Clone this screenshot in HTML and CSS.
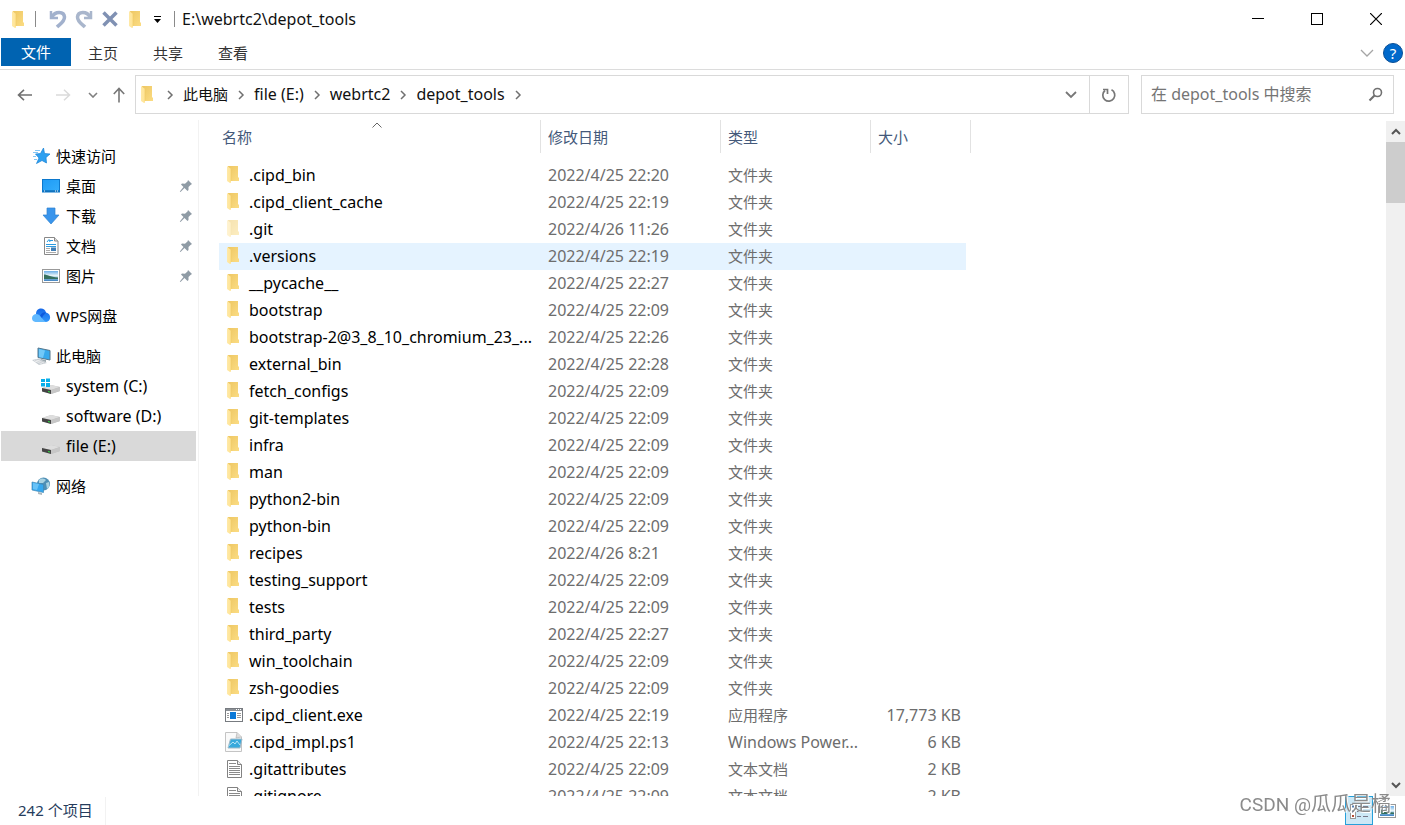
FILE: index.html
```html
<!DOCTYPE html>
<html lang="zh-CN">
<head>
<meta charset="utf-8">
<title>E:\webrtc2\depot_tools</title>
<link rel="stylesheet" href="styles.css">
</head>
<body>
<svg class="sprite" aria-hidden="true">
  <defs>
    <linearGradient id="g-front" x1="0" y1="0" x2="1" y2="0"><stop offset="0" stop-color="#ffe9a8"/><stop offset="1" stop-color="#ffe391"/></linearGradient>
    <linearGradient id="g-back" x1="0" y1="0" x2="1" y2="1"><stop offset="0" stop-color="#eec763"/><stop offset="1" stop-color="#fbdc83"/></linearGradient>
    <linearGradient id="g-blue" x1="0" y1="0" x2="1" y2="1"><stop offset="0" stop-color="#1e9bf5"/><stop offset="1" stop-color="#35aefc"/></linearGradient>
    <linearGradient id="g-cloud" x1="0" y1="0" x2="0" y2="1"><stop offset="0" stop-color="#1568e8"/><stop offset="1" stop-color="#2f96fb"/></linearGradient>
    <linearGradient id="g-sky" x1="0" y1="0" x2="0" y2="1"><stop offset="0" stop-color="#6aaee8"/><stop offset=".45" stop-color="#e6f3f8"/><stop offset=".7" stop-color="#8fc0dd"/><stop offset="1" stop-color="#3d80c2"/></linearGradient>
  </defs>
  <symbol id="folder" viewBox="0 0 12 17"><path d="M1 0H11V11L12 12V15H3Z" fill="url(#g-back)"/><path d="M0 0L4 3V16.500L3 17L0 15Z" fill="url(#g-front)"/><path d="M4 3V15" stroke="#efc964" stroke-width=".6"/></symbol>
  <symbol id="drive" viewBox="0 0 20 20"><path d="M1 12L10 9L19 11V15L10 18L1 15Z" fill="#bdbdbd"/><path d="M1 12L10 9L19 11L10 14Z" fill="#dedede"/><path d="M1 12L10 14V18L1 15.500Z" fill="#454545"/><path d="M10 14L19 11V15L10 18Z" fill="#c6c6c6"/><path d="M7 15L9 15.500V16.500L7 16Z" fill="#31e043"/></symbol>
  <symbol id="pin" viewBox="0 0 14 14"><path d="M9 1L13 5L11.500 6L9.500 8L9.500 11L8.500 12L5.500 9L1.500 13L.8 12.500L4.500 8L2 5.500L3 4.500L6 4.800L8.500 2.500Z" fill="#8f9ba5"/></symbol>
  <symbol id="photo" viewBox="0 0 20 20"><rect x="1.500" y="3.500" width="17" height="13" fill="#fff" stroke="#999"/><rect x="3" y="5" width="14" height="10" fill="url(#g-sky)"/><path d="M3 8.500C6 8.500 9 11 17 11.500V13H3Z" fill="#356f5e"/></symbol>
  <symbol id="text" viewBox="0 0 18 20"><path d="M2.500 1.500H12.500L16.500 5.500V18.500H2.500Z" fill="#fff" stroke="#828282"/><path d="M12.500 1.500V5.500H16.500" fill="#eee" stroke="#828282"/><path d="M4 4.500H11M4 7.500H15M4 9.500H15M4 11.500H15M4 13.500H15M4 15.500H15" stroke="#8a8a8a"/></symbol>
  <symbol id="crumb" viewBox="0 0 8 10"><path d="M2 1L6 5L2 9" fill="none" stroke="#707070" stroke-width="1.500"/></symbol>
</svg>

<header class="titlebar">
  <svg class="folder"><use href="#folder"/></svg>
  <i class="sep sep-app"></i>
  <button class="tool" aria-label="撤消"><svg width="18" height="20" viewBox="0 0 18 20"><path d="M2 2V9H9" fill="none" stroke="#a2b1cd" stroke-width="2.500"/><path d="M3 8C6 2 15 2 15.500 8C15.500 13 11 15 8 18" fill="none" stroke="#a2b1cd" stroke-width="3.500"/></svg></button>
  <button class="tool" aria-label="恢复"><svg width="18" height="20" viewBox="0 0 18 20"><path d="M16 2V9H9" fill="none" stroke="#a9b6cc" stroke-width="2.500"/><path d="M15 8C12 2 3 2 2.500 8C2.500 13 7 15 10 18" fill="none" stroke="#a9b6cc" stroke-width="3.500"/></svg></button>
  <button class="tool" aria-label="删除"><svg width="18" height="20" viewBox="0 0 18 20"><path d="M2.500 3.500L15.500 16.500M15.500 3.500L2.500 16.500" stroke="#8091b3" stroke-width="3.500"/></svg></button>
  <button class="tool tool-folder" aria-label="新建文件夹"><svg class="folder"><use href="#folder"/></svg></button>
  <button class="tool tool-more" aria-label="自定义"><svg width="9" height="10" viewBox="0 0 9 10"><path d="M1 2.500H8" stroke="#000"/><path d="M1 5H8L4.500 9Z"/></svg></button>
  <i class="sep"></i>
  <h1 class="title">E:\webrtc2\depot_tools</h1>
  <div class="winbuttons">
    <button aria-label="最小化"><svg width="12" height="12"><path d="M0 5.500H12" stroke="#000"/></svg></button>
    <button aria-label="最大化"><svg width="12" height="12"><rect x=".5" y=".5" width="11" height="11" fill="none" stroke="#000"/></svg></button>
    <button aria-label="关闭"><svg width="12" height="12"><path d="M0 0L12 12M12 0L0 12" stroke="#000" stroke-width="1.200"/></svg></button>
  </div>
</header>

<nav class="ribbon">
  <button class="tab file">文件</button>
  <button class="tab">主页</button>
  <button class="tab">共享</button>
  <button class="tab">查看</button>
  <div class="ribbon-end">
    <button aria-label="展开功能区"><svg width="14" height="8"><path d="M1 1L7 7L13 1" fill="none" stroke="#a5a5a5" stroke-width="1.300"/></svg></button>
    <button class="help" aria-label="帮助">?</button>
  </div>
</nav>

<div class="navrow">
  <div class="arrows">
    <button aria-label="后退"><svg width="16" height="12" viewBox="0 0 16 12"><path d="M15 6H1.500M7 .8L1.500 6L7 11.200" fill="none" stroke="#707070" stroke-width="1.600"/></svg></button>
    <button class="forward" aria-label="前进"><svg width="16" height="12" viewBox="0 0 16 12"><path d="M1 6H14.500M9 .8L14.500 6L9 11.200" fill="none" stroke="#dadada" stroke-width="1.500"/></svg></button>
    <button class="recent" aria-label="最近浏览的位置"><svg width="10" height="6" viewBox="0 0 10 6"><path d="M1 1L5 5L9 1" fill="none" stroke="#808080" stroke-width="1.600"/></svg></button>
    <button class="up" aria-label="向上"><svg width="12" height="16" viewBox="0 0 12 16"><path d="M6 15.500V1.500M.8 7L6 1.500L11.200 7" fill="none" stroke="#777" stroke-width="1.600"/></svg></button>
  </div>
  <div class="address">
    <svg class="folder"><use href="#folder"/></svg>
    <svg class="crumb"><use href="#crumb"/></svg>
    <button class="cjk">此电脑</button>
    <svg class="crumb"><use href="#crumb"/></svg>
    <button>file (E:)</button>
    <svg class="crumb"><use href="#crumb"/></svg>
    <button>webrtc2</button>
    <svg class="crumb"><use href="#crumb"/></svg>
    <button>depot_tools</button>
    <svg class="crumb"><use href="#crumb"/></svg>
    <button class="history" aria-label="以前的位置"><svg width="12" height="8" viewBox="0 0 12 8"><path d="M1 1L6 6L11 1" fill="none" stroke="#777" stroke-width="1.800"/></svg></button>
    <button class="refresh" aria-label="刷新"><svg width="16" height="16" viewBox="0 0 16 16"><path d="M10.500 2.800A6 6 0 1 1 4 3.500" fill="none" stroke="#777" stroke-width="1.700"/><path d="M2 2.500H6.500V7" fill="none" stroke="#777" stroke-width="1.700"/></svg></button>
  </div>
  <label class="search">
    <input type="text" placeholder="在 depot_tools 中搜索" aria-label="搜索">
    <svg width="15" height="15" viewBox="0 0 15 15"><circle cx="9.500" cy="5.500" r="4" fill="none" stroke="#707070" stroke-width="1.600"/><path d="M6.500 8.500L1.500 13.500" stroke="#707070" stroke-width="2.200"/></svg>
  </label>
</div>

<main class="main">
  <nav class="sidebar">
    <ul>
      <li><a href="#"><svg class="icon" viewBox="0 0 20 20"><path d="M12.500 2L13.500 7.500L19 8L15 11.500L15.500 17L11 14.500L5.500 17.500L8 12L4.500 8L9.500 7.500Z" fill="#2ea0f0" stroke="#1681d6" stroke-width=".7"/><path d="M4 4.500H9M2 6.500H7M2 10.500H5M3 13.500H6" stroke="#62b8f2" stroke-width=".8"/></svg><span>快速访问</span></a></li>
      <li class="sub"><a href="#"><svg class="icon" viewBox="0 0 20 20"><rect x="1.500" y="3.500" width="17" height="12.500" fill="url(#g-blue)" stroke="#0c78cc"/><path d="M2 15H18" stroke="#055598"/><path d="M3 15H4M14 15H15M16 15H17" stroke="#fff"/></svg><span>桌面</span><svg class="pin"><use href="#pin"/></svg></a></li>
      <li class="sub"><a href="#"><svg class="icon" viewBox="0 0 20 20"><path d="M6 2H14V9H18L10 18L2 9H6Z" fill="#3995ec" stroke="#2f82d0" stroke-width=".7"/></svg><span>下载</span><svg class="pin"><use href="#pin"/></svg></a></li>
      <li class="sub"><a href="#"><svg class="icon" viewBox="0 0 20 20"><path d="M3.500 1.500H13.500L17 5V18.500H3.500Z" fill="#fff" stroke="#888"/><path d="M13.500 1.500V5H17" fill="#ddd" stroke="#888"/><path d="M6 6L8 3.500L9 6M9 4.500H12M5 8.500H15M5 10.500H15" fill="none" stroke="#2c9be0"/><path d="M5 12.500H9M5 14.500H9M5 16.500H15" stroke="#aaa"/><rect x="10" y="11.500" width="5" height="3.500" fill="#417eb5"/></svg><span>文档</span><svg class="pin"><use href="#pin"/></svg></a></li>
      <li class="sub"><a href="#"><svg class="icon"><use href="#photo"/></svg><span>图片</span><svg class="pin"><use href="#pin"/></svg></a></li>
    </ul>
    <ul>
      <li><a href="#"><svg class="icon" viewBox="0 0 20 20"><path d="M5 8C5 1 14 1 15 6.500C20.500 7.500 20.500 15.500 15 16H8Z" fill="url(#g-cloud)"/><path d="M4.500 16C-.5 15.500 0 8.500 5 8C9.500 8 10.500 13 15 16Z" fill="#61b9ff"/><path d="M9 9.500C11 6.500 13 6 15 6.500C14 8 12 9 11 12Z" fill="#0d5add"/></svg><span>WPS网盘</span></a></li>
    </ul>
    <ul>
      <li><a href="#"><svg class="icon" viewBox="0 0 20 20"><path d="M7 2L19 4.500V14L7 11.500Z" fill="#38a9ec" stroke="#56778c"/><path d="M8 3L14 4.500L12 12L8 11Z" fill="#72c9f8"/><path d="M10 13L15 14V16L9 15Z" fill="#9da8ad"/><path d="M1 14L8 12.500L16 17L8 19Z" fill="#c7cdd2"/><path d="M3 14.500L11 18M5 14L13 17M4 16L9 14" stroke="#f6f6f6" stroke-width=".6"/></svg><span>此电脑</span></a></li>
      <li class="sub latin"><a href="#"><svg class="icon" viewBox="0 0 20 20"><use href="#drive"/><path d="M0 3H4V6H0ZM5 2.500H9V6H5ZM0 7H4V10.500H0ZM5 7H9V11H5Z" fill="#08afea"/></svg><span>system (C:)</span></a></li>
      <li class="sub latin"><a href="#"><svg class="icon"><use href="#drive"/></svg><span>software (D:)</span></a></li>
      <li class="sub latin selected"><a href="#"><svg class="icon"><use href="#drive"/></svg><span>file (E:)</span></a></li>
    </ul>
    <ul>
      <li><a href="#"><svg class="icon" viewBox="0 0 20 20"><circle cx="12.500" cy="8" r="6.500" fill="#4f8fb5"/><path d="M8 4C11 1 14 3 15 4L12 7L8 7ZM15 7L18 6C19 9 18 12 16 13Z" fill="#a9d2e2"/><path d="M1 6L12.500 8.500V16.500L1 14Z" fill="#36a7ee" stroke="#3f86b5" stroke-width=".7"/><path d="M2 7L8 8L6 14L2 13Z" fill="#68c3f8"/><path d="M7 16V18L11 19V17" fill="#acb7bd"/></svg><span>网络</span></a></li>
    </ul>
  </nav>

  <section class="files">
    <table>
      <colgroup><col class="c-name"><col class="c-date"><col class="c-type"><col class="c-size"><col class="c-edge"></colgroup>
      <thead>
        <tr>
          <th><button>名称</button><svg class="sort" width="10" height="6"><path d="M.5 5.500L5 1L9.500 5.500" fill="none" stroke="#666"/></svg></th>
          <th><button>修改日期</button></th>
          <th><button>类型</button></th>
          <th colspan="2"><button>大小</button></th>
        </tr>
      </thead>
      <tbody>
        <tr><td><svg class="folder"><use href="#folder"/></svg>.cipd_bin</td><td>2022/4/25 22:20</td><td class="cjk">文件夹</td><td></td></tr>
        <tr><td><svg class="folder"><use href="#folder"/></svg>.cipd_client_cache</td><td>2022/4/25 22:19</td><td class="cjk">文件夹</td><td></td></tr>
        <tr><td><svg class="folder faded"><use href="#folder"/></svg>.git</td><td>2022/4/26 11:26</td><td class="cjk">文件夹</td><td></td></tr>
        <tr class="hot"><td><svg class="folder"><use href="#folder"/></svg>.versions</td><td>2022/4/25 22:19</td><td class="cjk">文件夹</td><td></td></tr>
        <tr><td><svg class="folder"><use href="#folder"/></svg>__pycache__</td><td>2022/4/25 22:27</td><td class="cjk">文件夹</td><td></td></tr>
        <tr><td><svg class="folder"><use href="#folder"/></svg>bootstrap</td><td>2022/4/25 22:09</td><td class="cjk">文件夹</td><td></td></tr>
        <tr><td><svg class="folder"><use href="#folder"/></svg>bootstrap-2@3_8_10_chromium_23_...</td><td>2022/4/25 22:26</td><td class="cjk">文件夹</td><td></td></tr>
        <tr><td><svg class="folder"><use href="#folder"/></svg>external_bin</td><td>2022/4/25 22:28</td><td class="cjk">文件夹</td><td></td></tr>
        <tr><td><svg class="folder"><use href="#folder"/></svg>fetch_configs</td><td>2022/4/25 22:09</td><td class="cjk">文件夹</td><td></td></tr>
        <tr><td><svg class="folder"><use href="#folder"/></svg>git-templates</td><td>2022/4/25 22:09</td><td class="cjk">文件夹</td><td></td></tr>
        <tr><td><svg class="folder"><use href="#folder"/></svg>infra</td><td>2022/4/25 22:09</td><td class="cjk">文件夹</td><td></td></tr>
        <tr><td><svg class="folder"><use href="#folder"/></svg>man</td><td>2022/4/25 22:09</td><td class="cjk">文件夹</td><td></td></tr>
        <tr><td><svg class="folder"><use href="#folder"/></svg>python2-bin</td><td>2022/4/25 22:09</td><td class="cjk">文件夹</td><td></td></tr>
        <tr><td><svg class="folder"><use href="#folder"/></svg>python-bin</td><td>2022/4/25 22:09</td><td class="cjk">文件夹</td><td></td></tr>
        <tr><td><svg class="folder"><use href="#folder"/></svg>recipes</td><td>2022/4/26 8:21</td><td class="cjk">文件夹</td><td></td></tr>
        <tr><td><svg class="folder"><use href="#folder"/></svg>testing_support</td><td>2022/4/25 22:09</td><td class="cjk">文件夹</td><td></td></tr>
        <tr><td><svg class="folder"><use href="#folder"/></svg>tests</td><td>2022/4/25 22:09</td><td class="cjk">文件夹</td><td></td></tr>
        <tr><td><svg class="folder"><use href="#folder"/></svg>third_party</td><td>2022/4/25 22:27</td><td class="cjk">文件夹</td><td></td></tr>
        <tr><td><svg class="folder"><use href="#folder"/></svg>win_toolchain</td><td>2022/4/25 22:09</td><td class="cjk">文件夹</td><td></td></tr>
        <tr><td><svg class="folder"><use href="#folder"/></svg>zsh-goodies</td><td>2022/4/25 22:09</td><td class="cjk">文件夹</td><td></td></tr>
        <tr><td><svg class="doc" viewBox="0 0 18 20"><rect x=".5" y="3.500" width="17" height="13" fill="#fff" stroke="#777b80"/><path d="M1 5H17" stroke="#8b9096" stroke-width="2"/><path d="M11 4.500H12M13 4.500H14M15 4.500H16" stroke="#fff"/><rect x="5" y="7" width="6" height="7" fill="#0a78d7"/><path d="M2 8.500H4M2 10.500H4M2 12.500H4M12 8.500H16M12 10.500H16M12 12.500H16" stroke="#999"/></svg>.cipd_client.exe</td><td>2022/4/25 22:19</td><td class="cjk">应用程序</td><td>17,773 KB</td></tr>
        <tr><td><svg class="doc" viewBox="0 0 18 20"><path d="M.5 .5H12L16.500 5V19.500H.5Z" fill="#fafafa" stroke="#c4c4c4"/><path d="M12 .5L11 6L16.500 5" fill="#ddd" stroke="#aaa" stroke-width=".6"/><path d="M5.500 7H17L15 16H3Z" fill="#37a9dc" stroke="#a1bbc9"/><path d="M3.500 14L8 10L10 12L12 9L15 13" fill="none" stroke="#b5e4f7"/></svg>.cipd_impl.ps1</td><td>2022/4/25 22:13</td><td>Windows Power...</td><td>6 KB</td></tr>
        <tr><td><svg class="doc"><use href="#text"/></svg>.gitattributes</td><td>2022/4/25 22:09</td><td class="cjk">文本文档</td><td>2 KB</td></tr>
        <tr><td><svg class="doc"><use href="#text"/></svg>.gitignore</td><td>2022/4/25 22:09</td><td class="cjk">文本文档</td><td>2 KB</td></tr>
      </tbody>
    </table>
  </section>

  <div class="scrollbar">
    <button aria-label="向上滚动"><svg width="10" height="7" viewBox="0 0 10 7"><path d="M1 6L5 2L9 6" fill="none" stroke="#555" stroke-width="2"/></svg></button>
    <div class="thumb"></div>
    <button class="down" aria-label="向下滚动"><svg width="10" height="7" viewBox="0 0 10 7"><path d="M1 1L5 5L9 1" fill="none" stroke="#555" stroke-width="2"/></svg></button>
  </div>
</main>

<footer class="status">
  <span class="count">242 个项目</span>
  <div class="views">
    <button class="on" aria-label="详细信息"><svg width="20" height="20" viewBox="0 0 20 20"><rect x="1.500" y="3.500" width="5" height="14" fill="#fff" stroke="#999"/><path d="M8 5.500H12M14 5.500H19M8 10.500H12M14 10.500H19M8 15.500H12M14 15.500H19" stroke="#778"/><path d="M3 5.500H5M3 10.500H5" stroke="#547fb0" stroke-width="2"/><path d="M3 15H5" stroke="#b54c35" stroke-width="2"/></svg></button>
    <button aria-label="大缩略图"><svg class="icon"><use href="#photo"/></svg></button>
  </div>
</footer>
<div class="watermark">CSDN @<span>瓜瓜是橘</span></div>
</body>
</html>
```

FILE: styles.css
```css
* { box-sizing: border-box; }

body {
  margin: 0;
  height: 100vh;
  display: flex;
  flex-direction: column;
  overflow: hidden;
  background: #fff;
  color: #111;
  font: 16px/26px "Noto Sans", "Noto Sans CJK SC", sans-serif;
}

button {
  display: flex;
  align-items: center;
  justify-content: center;
  margin: 0;
  padding: 0;
  border: 0;
  background: none;
  color: inherit;
  font: inherit;
}

svg { display: block; flex: none; }
.sprite { position: absolute; width: 0; height: 0; }
.folder { width: 12px; height: 17px; }
.icon { width: 20px; height: 20px; }
.cjk { font-size: 15px; }

/* title bar */
.titlebar { display: flex; align-items: center; height: 38px; padding-left: 12px; flex: none; }
.sep { width: 1px; height: 16px; background: #8a8a8a; }
.sep-app { margin: 0 13px 0 11px; }
.tool { width: 18px; height: 20px; margin-right: 8px; }
.tool-folder { width: 12px; margin: 0 12px 0 2px; }
.tool-more { width: 9px; margin-right: 12px; }
.title { margin: 0 0 0 7px; font-size: 16px; font-weight: 400; }
.winbuttons { display: flex; margin-left: auto; }
.winbuttons button { width: 59px; height: 38px; }

/* ribbon */
.ribbon { display: flex; flex: none; height: 32px; padding-left: 1px; border-bottom: 1px solid #dcdcdc; }
.tab { width: 64px; height: 29px; margin-right: 1px; font-size: 15px; color: #333; }
.tab.file { width: 70px; height: 28px; margin: 0; background: #0063b1; color: #fff; }
.ribbon-end { display: flex; align-items: center; gap: 9px; height: 30px; margin-left: auto; padding-right: 2px; }
.help { width: 20px; height: 20px; border: 1px solid #0a4f96; border-radius: 50%; background: #0069cb; color: #fff; font-size: 15px; line-height: 18px; }

/* navigation row */
.navrow { display: flex; flex: none; height: 50px; padding: 5px 11px 6px 17px; }
.arrows { display: flex; align-items: center; width: 118px; }
.forward { margin-left: 22px; }
.recent { margin-left: 17px; }
.up { margin-left: 15px; }
.address { display: flex; flex: 1; align-items: center; padding-left: 5px; border: 1px solid #d9d9d9; color: #111; }
.address button { padding-bottom: 2px; }
.address .crumb { width: 8px; height: 10px; margin: 0 9px; }
.address .crumb:nth-of-type(2) { margin-left: 13px; }
.address .history { width: 37px; height: 37px; margin-left: auto; padding: 0; }
.address .refresh { width: 39px; height: 37px; padding: 0; border-left: 1px solid #d9d9d9; }
.search { display: flex; align-items: center; width: 253px; margin-left: 12px; padding: 0 10px 0 9px; border: 1px solid #d9d9d9; }
.search input { flex: 1; min-width: 0; padding: 0 0 2px; border: 0; outline: 0; background: none; font: inherit; }
.search input::placeholder { color: #757575; opacity: 1; }

/* main area */
.main { display: flex; flex: 1; min-height: 0; }

.sidebar { width: 199px; flex: none; padding: 21px 2px 0 1px; border-right: 1px solid #f2f2f2; font-size: 15px; }
.sidebar ul { margin: 0 0 10px; padding: 0; list-style: none; }
.sidebar a { display: flex; align-items: center; gap: 5px; height: 30px; padding: 0 3px 0 30px; color: #000; text-decoration: none; }
.sidebar .sub a { padding-left: 40px; }
.sidebar .latin { font-size: 16px; }
.sidebar .selected { background: #d9d9d9; }
.pin { width: 14px; height: 14px; margin-left: auto; }

.files { flex: 1; min-width: 0; padding-left: 20px; overflow: hidden; }
.files table { width: 752px; table-layout: fixed; border-collapse: separate; border-spacing: 0; }
.c-name { width: 322px; }
.c-date { width: 180px; }
.c-type { width: 150px; }
.c-size { width: 95px; }
.c-edge { width: 5px; }
.files th { position: relative; height: 42px; padding: 0 0 9px 7px; text-align: left; font-size: 15px; font-weight: 400; color: #44597a; background: linear-gradient(#e2e2e2, #e2e2e2) right top / 1px 33px no-repeat; }
.files th:first-child { padding-left: 3px; }
.sort { position: absolute; left: calc(50% - 8px); top: 2px; }
.files td { height: 27px; padding: 0 0 0 7px; color: #6d6d6d; line-height: 27px; white-space: nowrap; }
.files td:first-child { display: flex; align-items: center; padding-left: 8px; color: #000; }
.files td:nth-child(4) { padding: 0 5px 0 0; text-align: right; }
.files td .folder { margin: 0 10px 2px 0; }
.files td .doc { width: 18px; height: 20px; margin: 0 6px 2px -2px; }
.faded { opacity: .5; }
.hot td { background: #e5f3ff; }

.scrollbar { display: flex; flex-direction: column; width: 19px; flex: none; margin-top: 1px; background: #f0f0f0; }
.scrollbar button { height: 21px; }
.scrollbar .down { margin-top: auto; }
.thumb { height: 61px; background: #cdcdcd; }

/* status bar */
.status { display: flex; flex: none; align-items: center; height: 29px; padding: 0 8px 0 18px; font-size: 15px; color: #263c5c; }
.count { padding: 0 12px 2px 0; border-right: 1px solid #f2f2f2; }
.views { display: flex; gap: 4px; margin-left: auto; }
.views button { height: 29px; }
.views .on { width: 28px; border: 1px solid #26a0da; background: #cce8f6; }

.watermark { position: fixed; right: 14px; bottom: 7px; color: #8b8b8b; font: 19px/26px Roboto, sans-serif; text-shadow: 1px 1px 0 #fff; }
.watermark span { font: 20px/26px "Noto Sans CJK SC", sans-serif; }
```
